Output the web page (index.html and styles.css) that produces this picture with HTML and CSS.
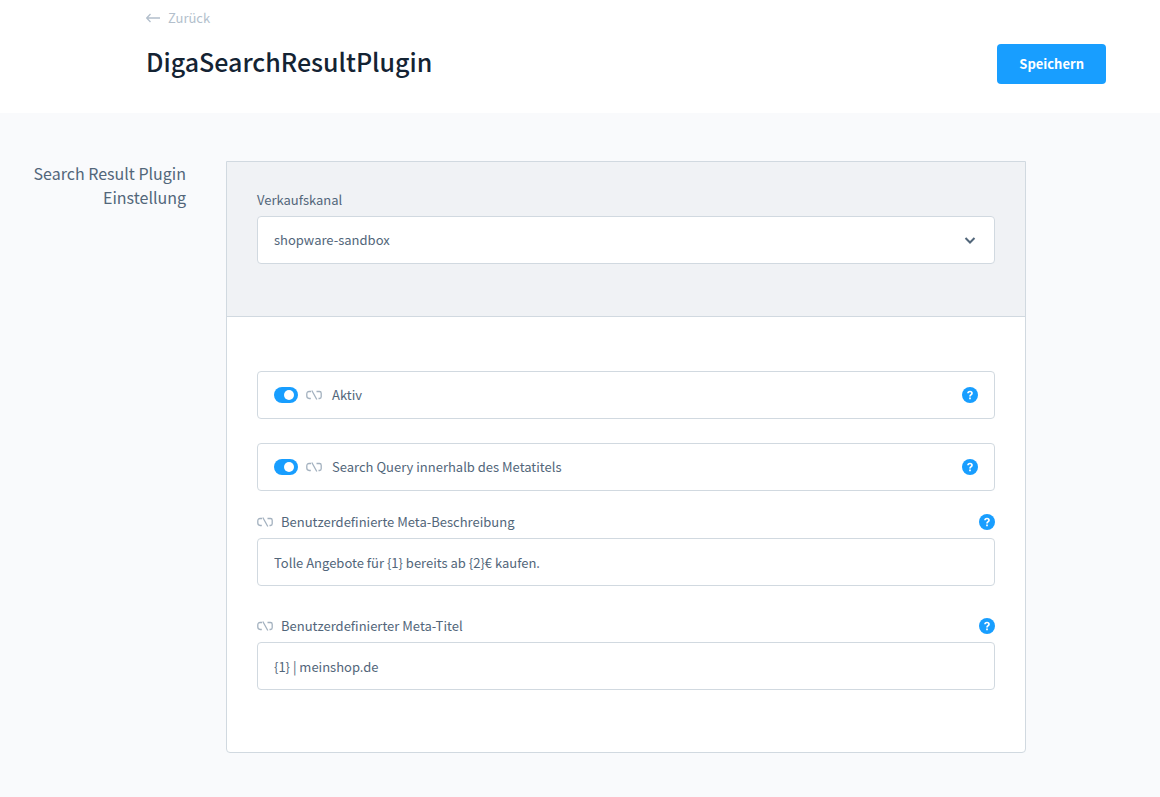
FILE: index.html
```html
<!DOCTYPE html>
<html lang="de">
<head>
<meta charset="utf-8">
<meta name="viewport" content="width=device-width, initial-scale=1">
<title>DigaSearchResultPlugin</title>
<link rel="stylesheet" href="styles.css">
</head>
<body>
<svg class="sprite" aria-hidden="true">
  <symbol id="unlink" viewBox="0 0 16 16">
    <path d="M5 4.500H3.200Q.8 4.500.8 6.900V9.100Q.8 11.500 3.200 11.500H4.800M10.500 4.500H13.500Q15.200 4.500 15.200 6.200V9.800Q15.200 11.500 13.500 11.500H12.500M5.800 3.500L10.800 12.500" fill="none" stroke="currentColor" stroke-width="1.300"/>
  </symbol>
  <symbol id="question" viewBox="0 0 16 16">
    <path d="M6 6.300Q6 4.500 8 4.500T10 6.300Q10 7.200 9 7.700T8 9.500M8 10.600V12.200" fill="none" stroke="currentColor" stroke-width="1.700"/>
  </symbol>
</svg>
<header class="page-header">
  <div class="heading">
    <a class="back" href="#">
      <svg class="back-icon" viewBox="0 0 16 16" aria-hidden="true"><path d="M14 8H.7M4.500 4L.7 8L4.500 12" fill="none" stroke="currentColor" stroke-width="1.300"/></svg>
      Zurück
    </a>
    <h1 class="title">DigaSearchResultPlugin</h1>
  </div>
  <button class="save" type="submit" form="settings">Speichern</button>
</header>
<main class="content">
  <h2 class="section-title">Search Result Plugin Einstellung</h2>
  <form class="card" id="settings">
    <div class="channel">
      <label class="label" for="channel">Verkaufskanal</label>
      <div class="select-wrap">
        <select class="control" id="channel"><option>shopware-sandbox</option></select>
        <svg class="chevron" viewBox="0 0 16 16" aria-hidden="true"><path d="M2.500 6L7 10.500L11.500 6" fill="none" stroke="currentColor" stroke-width="2"/></svg>
      </div>
    </div>
    <div class="fields">
      <div class="switch-row">
        <input class="switch" type="checkbox" id="active" checked>
        <svg class="unlink"><use href="#unlink"/></svg>
        <label class="label" for="active">Aktiv</label>
        <button class="help" type="button" aria-label="Hilfe"><svg class="help-icon"><use href="#question"/></svg></button>
      </div>
      <div class="switch-row">
        <input class="switch" type="checkbox" id="query" checked>
        <svg class="unlink"><use href="#unlink"/></svg>
        <label class="label" for="query">Search Query innerhalb des Metatitels</label>
        <button class="help" type="button" aria-label="Hilfe"><svg class="help-icon"><use href="#question"/></svg></button>
      </div>
      <div class="field">
        <div class="field-head">
          <svg class="unlink"><use href="#unlink"/></svg>
          <label class="label" for="description">Benutzerdefinierte Meta-Beschreibung</label>
          <button class="help" type="button" aria-label="Hilfe"><svg class="help-icon"><use href="#question"/></svg></button>
        </div>
        <input class="control" type="text" id="description" value="Tolle Angebote für {1} bereits ab {2}€ kaufen.">
      </div>
      <div class="field">
        <div class="field-head">
          <svg class="unlink"><use href="#unlink"/></svg>
          <label class="label" for="meta-title">Benutzerdefinierter Meta-Titel</label>
          <button class="help" type="button" aria-label="Hilfe"><svg class="help-icon"><use href="#question"/></svg></button>
        </div>
        <input class="control" type="text" id="meta-title" value="{1} | meinshop.de">
      </div>
    </div>
  </form>
</main>
</body>
</html>
```

FILE: styles.css
```css
* { box-sizing: border-box; }
body {
  margin: 0;
  background: #f9fafc;
  color: #52667a;
  font: 13px/16px "Noto Sans CJK JP", "Noto Sans", sans-serif;
}
button, input, select { font: inherit; color: inherit; margin: 0; }
.sprite { display: none; }
.page-header {
  display: flex;
  align-items: flex-start;
  justify-content: space-between;
  padding: 10px 54px 29px 146px;
  background: #fff;
}
.back {
  display: flex;
  align-items: center;
  gap: 6px;
  color: #b3bfcc;
  text-decoration: none;
}
.back-icon { width: 16px; height: 16px; }
.title {
  margin: 19px 0 0;
  color: #142333;
  font-size: 25px;
  font-weight: 500;
  line-height: 32px;
}
.save {
  height: 40px;
  margin-top: 34px;
  padding: 0 22px;
  border: 0;
  border-radius: 4px;
  background: #189eff;
  color: #fff;
  font-weight: 700;
}
.content {
  display: grid;
  grid-template-columns: 160px minmax(0, 1fr);
  gap: 40px;
  padding: 48px 134px 44px 26px;
}
.section-title {
  margin: 0;
  font-size: 16px;
  font-weight: 400;
  line-height: 24px;
  text-align: right;
}
.card {
  border: 1px solid #d1d9e0;
  border-radius: 0 0 4px 4px;
  background: #fff;
  overflow: hidden;
}
.channel {
  padding: 30px 30px 52px;
  border-bottom: 1px solid #d1d9e0;
  background: #f0f2f5;
}
.channel .label { display: block; margin-bottom: 8px; }
.select-wrap { position: relative; }
.control {
  display: block;
  width: 100%;
  height: 48px;
  padding: 0 16px;
  border: 1px solid #d1d9e0;
  border-radius: 4px;
  background: #fff;
  appearance: none;
}
.chevron {
  position: absolute;
  top: 16px;
  right: 16px;
  width: 16px;
  height: 16px;
  pointer-events: none;
}
.fields { padding: 54px 30px 62px; }
.switch-row {
  display: flex;
  align-items: center;
  height: 48px;
  padding: 0 16px;
  border: 1px solid #d1d9e0;
  border-radius: 4px;
}
.switch-row + .switch-row { margin-top: 24px; }
.switch-row + .field { margin-top: 23px; }
.switch {
  width: 24px;
  height: 16px;
  margin-right: 8px;
  padding: 3px 4px;
  border-radius: 8px;
  background: #189eff;
  appearance: none;
}
.switch::before {
  display: block;
  width: 10px;
  height: 10px;
  border-radius: 50%;
  background: #fff;
  content: "";
}
.switch:checked::before { margin-left: auto; }
.unlink { width: 16px; height: 16px; flex: none; color: #a3b1bf; }
.switch-row .label { margin-left: 10px; }
.help {
  width: 16px;
  height: 16px;
  margin-left: auto;
  padding: 0;
  border: 0;
  border-radius: 50%;
  background: #189eff;
  color: #fff;
}
.help-icon { display: block; width: 16px; height: 16px; }
.field + .field { margin-top: 32px; }
.field-head {
  display: flex;
  align-items: center;
  margin-bottom: 8px;
}
.field-head .label { margin-left: 8px; }
```
